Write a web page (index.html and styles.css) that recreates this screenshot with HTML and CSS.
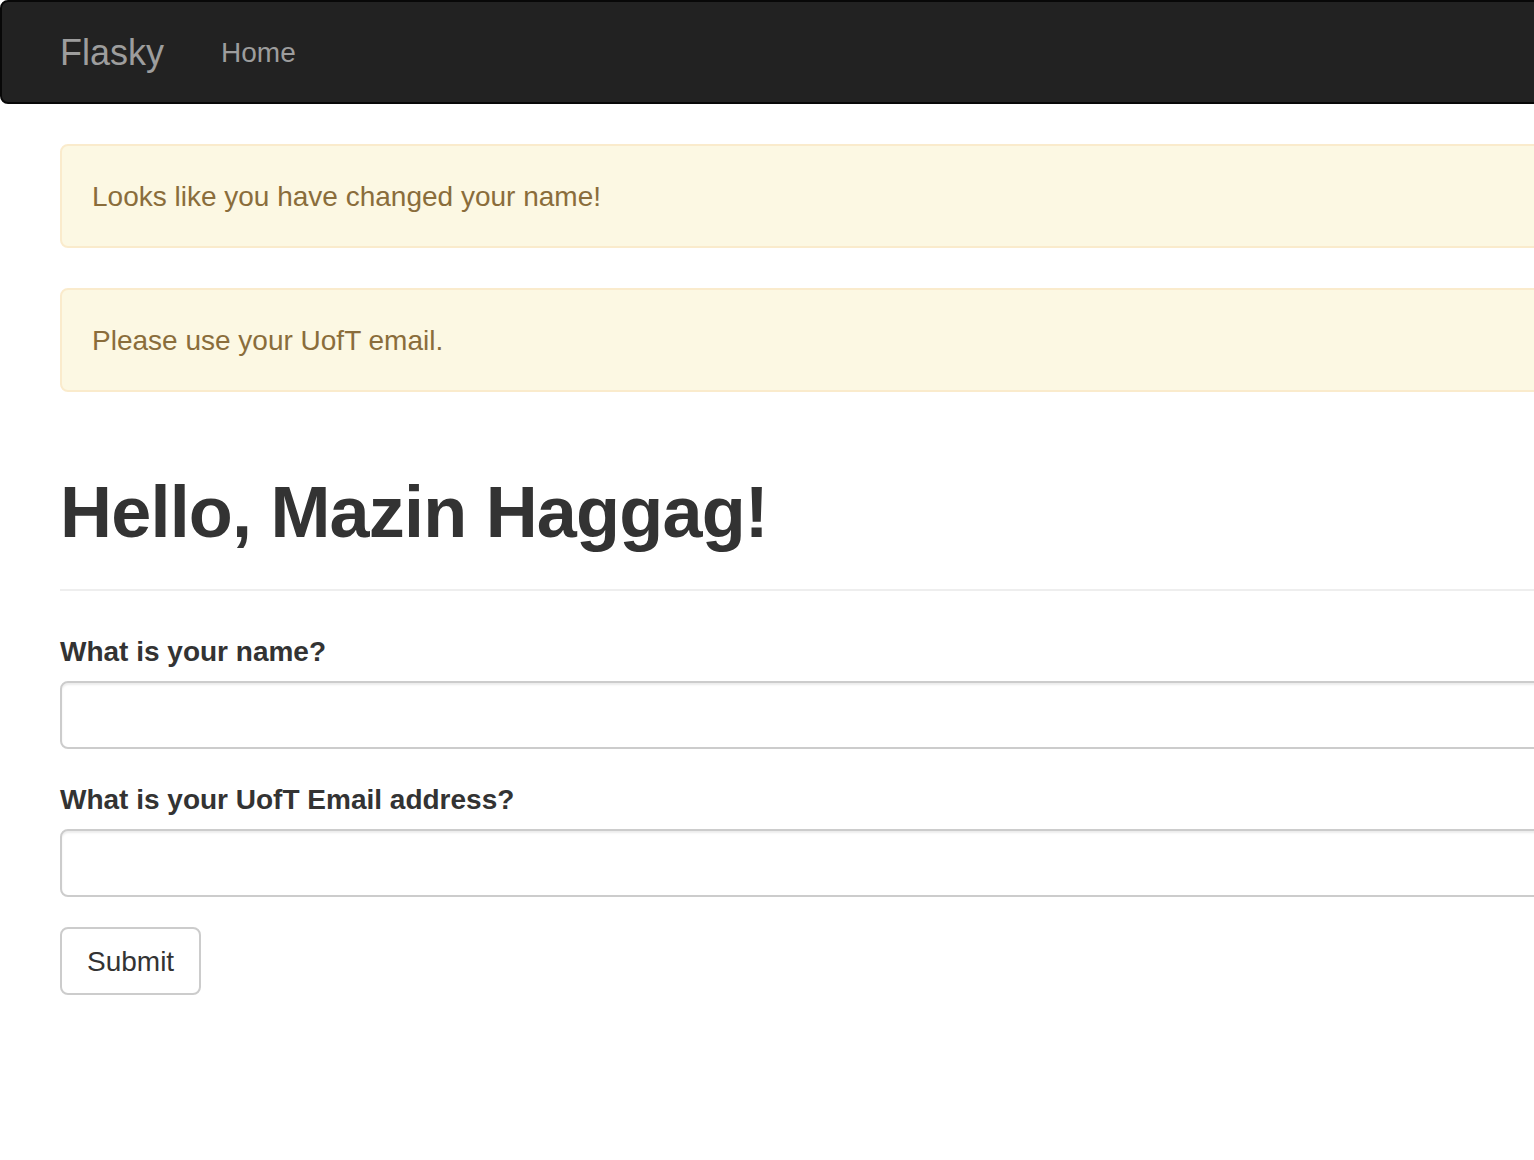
FILE: index.html
```html
<!DOCTYPE html>
<html lang="en">
<head>
<meta charset="utf-8">
<title>Flasky</title>
<link rel="stylesheet" href="styles.css">
</head>
<body>
<div class="page">
  <nav class="navbar">
    <a class="brand" href="#">Flasky</a>
    <ul class="nav">
      <li><a href="#">Home</a></li>
    </ul>
  </nav>
  <main class="container">
    <div class="alert">Looks like you have changed your name!</div>
    <div class="alert">Please use your UofT email.</div>
    <div class="page-header">
      <h1>Hello, Mazin Haggag!</h1>
    </div>
    <form class="form">
      <div class="form-group">
        <label class="label" for="name">What is your name?</label>
        <input class="input" id="name" type="text">
      </div>
      <div class="form-group">
        <label class="label" for="email">What is your UofT Email address?</label>
        <input class="input" id="email" type="text">
      </div>
      <button class="btn" type="button">Submit</button>
    </form>
  </main>
</div>
</body>
</html>
```

FILE: styles.css
```css
html, body {
  margin: 0;
  padding: 0;
  background: #fff;
  overflow: hidden;
}
body {
  font-family: "Liberation Sans", Arial, Helvetica, sans-serif;
  font-size: 28px;
  line-height: 40px;
  color: #333;
}
.page {
  width: 2400px;
}
.navbar {
  display: flex;
  align-items: flex-start;
  height: 100px;
  background: #222;
  border: 2px solid #080808;
  border-radius: 8px;
  margin-bottom: 40px;
  padding-left: 28px;
}
.brand {
  display: block;
  padding: 31px 27px 29px 30px;
  font-size: 36px;
  line-height: 40px;
  color: #9d9d9d;
  text-decoration: none;
}
.nav {
  list-style: none;
  margin: 0;
  padding: 0;
  display: flex;
}
.nav a {
  display: block;
  padding: 31px 30px 29px;
  font-size: 28px;
  line-height: 40px;
  color: #9d9d9d;
  text-decoration: none;
}
.container {
  padding: 0 0 0 60px;
}
.alert {
  padding: 31px 30px 29px;
  border: 2px solid #faebcc;
  border-radius: 8px;
  background: #fcf8e3;
  color: #8a6d3b;
  margin-bottom: 40px;
}
.page-header {
  margin: 80px 0 40px;
  padding-bottom: 18px;
  border-bottom: 2px solid #eee;
}
.page-header h1 {
  margin: 0 0 20px;
  padding-top: 1px;
  font-size: 72px;
  line-height: 78px;
  font-weight: 700;
  letter-spacing: -0.8px;
  color: #333;
}
.form-group {
  margin-bottom: 30px;
}
.label {
  display: block;
  font-weight: 700;
  padding-top: 1px;
  margin-bottom: 9px;
}
.input {
  display: block;
  box-sizing: border-box;
  width: 100%;
  height: 68px;
  padding: 12px 24px;
  font: inherit;
  color: #555;
  background: #fff;
  border: 2px solid #ccc;
  border-radius: 8px;
  box-shadow: inset 0 2px 2px rgba(0, 0, 0, 0.075);
  margin: 0;
}
.btn {
  display: block;
  box-sizing: border-box;
  height: 68px;
  padding: 13px 25px 11px;
  font: inherit;
  color: #333;
  background: #fff;
  border: 2px solid #ccc;
  border-radius: 8px;
  margin: 0;
}
```
